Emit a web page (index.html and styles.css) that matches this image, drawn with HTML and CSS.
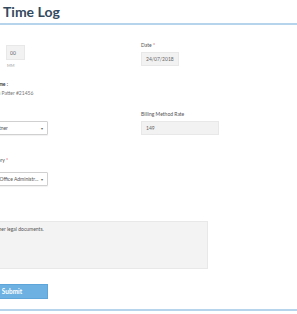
FILE: index.html
```html
<!DOCTYPE html>
<html lang="en">
<head>
    <meta charset="UTF-8">
    <meta name="viewport" content="width=device-width, initial-scale=1.0">
    <title>Time Log</title>
    <link rel="stylesheet" href="styles.css">
</head>
<body>

<div class="title-bar">
    <h1>Time Log</h1>
</div>

<form class="log-form">
    <div class="row row-time">
        <div class="field">
            <label>Time</label>
            <div class="time">
                <div class="time-part">
                    <input type="text" class="input input-time" value="00">
                    <span class="hint">HH</span>
                </div>
                <div class="time-part">
                    <input type="text" class="input input-time" value="00">
                    <span class="hint">MM</span>
                </div>
            </div>
        </div>
        <div class="field field-date">
            <label>Date <span class="req">*</span></label>
            <input type="text" class="input input-date" value="24/07/2018">
        </div>
    </div>

    <div class="row row-matter">
        <div class="field">
            <label class="strong">Matter Name :</label>
            <span class="value">John Smith Patter #21456</span>
        </div>
    </div>

    <div class="row row-billing">
        <div class="field">
            <label>Billing</label>
            <div class="select">
                <span class="select-text">Sr Partner</span>
                <span class="caret">&#9662;</span>
            </div>
        </div>
        <div class="field">
            <label>Billing Method Rate</label>
            <input type="text" class="input input-rate" value="149">
        </div>
    </div>

    <div class="row row-category">
        <div class="field">
            <label>Job Category <span class="req">*</span></label>
            <div class="select">
                <span class="select-text">General Office Administr...</span>
                <span class="caret">&#9662;</span>
            </div>
        </div>
    </div>

    <div class="row row-desc">
        <div class="field">
            <label>Notes</label>
            <textarea class="textarea">Filed other legal documents.</textarea>
        </div>
    </div>

    <div class="row row-submit">
        <button type="button" class="btn-submit">Submit</button>
    </div>
</form>

<div class="bottom-rule"></div>

</body>
</html>
```

FILE: styles.css
```css
body { margin: 0; font-family: "Lato", "Liberation Sans", sans-serif; background: #fff; overflow: hidden; }

.title-bar { border-bottom: 2px solid #b6d5ec; padding: 3px 0 2px 3px; }
.title-bar h1 { margin: 0; font-size: 14px; line-height: 18px; font-weight: 700; color: #34495e; }

.log-form { margin-left: -24px; width: 330px; }
.row { display: grid; grid-template-columns: 165px 1fr; }
.field { display: flex; flex-direction: column; align-items: flex-start; }
.field label { font-size: 5px; line-height: 8px; color: #555; }
.field label.strong { font-weight: 700; color: #333; }
.req { color: #d9363e; }

.input { box-sizing: border-box; height: 14px; border: 1px solid #e8e8e8; background: #f2f2f2; font-family: "Lato", "Liberation Sans", sans-serif; font-size: 5px; color: #666; padding: 0 4px; margin: 0; }

.row-time { margin-top: 6px; }
.time { display: flex; gap: 11px; margin-top: 6px; }
.time-part { display: flex; flex-direction: column; align-items: flex-start; }
.input-time { width: 19px; height: 15px; padding: 0 3px; }
.hint { font-size: 4px; line-height: 6px; color: #a0a0a0; margin-top: 3px; padding-left: 1px; }
.field-date { padding-top: 10px; }
.input-date { width: 38px; margin-top: 3px; }

.row-matter { margin-top: 11px; }
.value { font-size: 5px; line-height: 8px; color: #777; margin-top: 1px; }

.row-billing { margin-top: 13px; }
.row-billing .field label { margin-bottom: 3px; }
.input-rate { width: 78px; }

.select { box-sizing: border-box; width: 72px; height: 14px; display: flex; align-items: center; justify-content: space-between; padding: 0 4px 0 9px; border: 1px solid #d0d0d0; border-radius: 1px; background: #fff; box-shadow: 0 1px 1px rgba(0,0,0,0.06); }
.select-text { font-size: 5px; color: #555; white-space: nowrap; overflow: hidden; }
.caret { font-size: 4px; color: #666; }

.row-category { margin-top: 21px; }
.row-category .field label { margin-bottom: 8px; }
.row-category .select { padding-left: 4px; }

.row-desc { margin-top: 22px; grid-template-columns: 1fr; }
.row-desc .field label { margin-bottom: 5px; }
.textarea { box-sizing: border-box; width: 232px; height: 48px; resize: none; border: 1px solid #e8e8e8; background: #f3f3f3; font-family: "Lato", "Liberation Sans", sans-serif; font-size: 5px; color: #555; padding: 4px 5px; margin: 0; }

.row-submit { margin-top: 15px; }
.btn-submit { width: 72px; height: 15px; border: 1px solid #5ea6da; background: #6cb1e1; color: #fff; font-family: "Lato", "Liberation Sans", sans-serif; font-size: 6.5px; font-weight: 700; padding: 0; }

.bottom-rule { margin-top: 10px; border-top: 2px solid #b6d5ec; }
```
